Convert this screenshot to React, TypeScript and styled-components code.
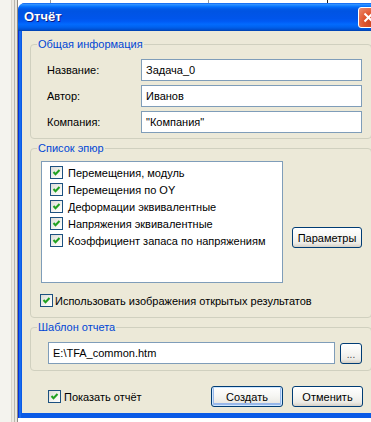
import React from 'react';
import styled, { createGlobalStyle, css } from 'styled-components';

const GlobalStyle = createGlobalStyle`
  html, body {
    margin: 0;
    padding: 0;
    background: #ffffff;
    overflow: hidden;
  }
  body {
    font-family: "Liberation Sans", Arial, sans-serif;
    font-size: 11px;
    color: #000;
  }
`;

const Desktop = styled.div`
  display: flex;
  width: 371px;
  height: 422px;
  overflow: hidden;
`;

// кусок окна позади диалога
const LeftPane = styled.div`
  flex: none;
  width: 18px;
  background: linear-gradient(
    to right,
    #f4f3ee 0 11px,
    #d9d6cc 11px 12px,
    #eceae3 12px 14px,
    #b9b6ad 14px 15px,
    #e9e7df 15px 17px,
    #8f8c84 17px 18px
  );
`;

const Stage = styled.div`
  flex: none;
  width: 366px;
  display: flex;
  flex-direction: column;
`;

const TopStrip = styled.div`
  height: 3px;
  background: linear-gradient(
    to right,
    #fff 0 32px,
    #9a9a9a 32px 33px,
    #fff 33px 190px,
    #9a9a9a 190px 191px,
    #fff 191px 309px,
    #222 309px 310px,
    #fff 310px
  );
`;

const Window = styled.div`
  display: flex;
  flex-direction: column;
  height: 415px;
  border-radius: 7px 7px 0 0;
  background: linear-gradient(
    to right,
    #0831d9 0 1px,
    #166aee 1px 3px,
    #0a5ae6 3px
  );
`;

const TitleBar = styled.div`
  flex: none;
  height: 28px;
  display: flex;
  align-items: center;
  padding: 0 5px 0 6px;
  border-radius: 7px 7px 0 0;
  background: linear-gradient(
    to bottom,
    #0058ee 0%,
    #3593ff 4%,
    #288eff 7%,
    #127dff 10%,
    #036ffc 14%,
    #0262ee 18%,
    #0057e5 24%,
    #0054e3 30%,
    #0055eb 56%,
    #005bf5 66%,
    #026afe 76%,
    #0062ef 86%,
    #0052d6 94%,
    #0040ab 100%
  );
`;

const Title = styled.span`
  flex: 1;
  color: #fff;
  font-family: "Liberation Sans", Arial, sans-serif;
  font-weight: bold;
  font-size: 13px;
  text-shadow: 1px 1px 0 #0a1883;
  padding-bottom: 1px;
`;

const CloseButton = styled.div`
  flex: none;
  width: 21px;
  height: 21px;
  box-sizing: border-box;
  border: 1px solid #fff;
  border-radius: 3px;
  display: flex;
  align-items: center;
  justify-content: center;
  background: radial-gradient(circle at 70% 75%, #c84421 0%, #e0552e 45%, #ec8d70 100%);
`;

const Client = styled.div`
  flex: 1;
  margin: 0 4px 5px;
  padding: 7px 8px 6px;
  background: #ece9d8;
  display: flex;
  flex-direction: column;
`;

const Group = styled.fieldset<{ $gap?: number }>`
  margin: ${p => p.$gap ?? 0}px 0 0;
  padding: 0;
  border: 1px solid #d0d0bf;
  border-radius: 4px;
  min-width: 0;
`;

const Legend = styled.legend`
  margin-left: 6px;
  padding: 0 1px;
  color: #0046d5;
  font-size: 11px;
  line-height: 13px;
`;

const InfoGrid = styled.div`
  display: grid;
  grid-template-columns: 94px 1fr;
  grid-auto-rows: 22px;
  row-gap: 4px;
  align-items: center;
  padding: 8px 9px 5px 16px;
`;

const FieldLabel = styled.span`
  font-size: 11px;
`;

const TextField = styled.div<{ $grow?: boolean }>`
  box-sizing: border-box;
  height: 22px;
  display: flex;
  align-items: center;
  padding: 0 4px;
  border: 1px solid #7f9db9;
  background: #fff;
  font-size: 11px;
  white-space: nowrap;
  ${p => p.$grow && css`flex: 1;`}
`;

const PlotsBody = styled.div`
  padding: 6px 9px 10px 10px;
`;

const PlotsRow = styled.div`
  display: flex;
  gap: 9px;
  align-items: flex-start;
`;

const ListBox = styled.div`
  box-sizing: border-box;
  width: 243px;
  height: 122px;
  padding: 2px 0 0 8px;
  border: 1px solid #7f9db9;
  background: #fff;
`;

const ListItem = styled.div`
  height: 17px;
  display: flex;
  align-items: center;
  gap: 5px;
  white-space: nowrap;
`;

const CheckRow = styled.div<{ $offset?: number; $gap?: number }>`
  display: flex;
  align-items: center;
  gap: ${p => p.$gap ?? 2}px;
  margin-left: ${p => p.$offset ?? 0}px;
  white-space: nowrap;
`;

const UseImagesRow = styled(CheckRow)`
  margin-top: 11px;
  height: 13px;
`;

const Box = styled.span`
  flex: none;
  box-sizing: border-box;
  width: 13px;
  height: 13px;
  border: 1px solid #1c5180;
  background: linear-gradient(135deg, #dcdcd7 0%, #f4f4f0 60%, #ffffff 100%);
  display: flex;
  align-items: center;
  justify-content: center;
`;

const Button = styled.div<{ $w: number; $h?: number; $primary?: boolean }>`
  flex: none;
  box-sizing: border-box;
  width: ${p => p.$w}px;
  height: ${p => p.$h ?? 21}px;
  display: flex;
  align-items: center;
  justify-content: center;
  border: 1px solid #003c74;
  border-radius: 3px;
  font-size: 11px;
  background: linear-gradient(
    to bottom,
    #ffffff 0%,
    #f6f6f3 45%,
    #ecebe6 80%,
    #d6d0c5 100%
  );
  ${p => p.$primary && css`
    box-shadow: inset 0 0 0 1px #cee7ff, inset 0 -1px 0 2px #98b8ea;
  `}
`;

const ParamsButton = styled(Button)`
  margin-top: 66px;
`;

const TemplateBody = styled.div`
  display: flex;
  align-items: center;
  gap: 5px;
  padding: 8px 9px 6px 17px;
`;

const BrowseButton = styled(Button)`
  align-items: flex-end;
  padding-bottom: 4px;
  font-size: 10px;
  line-height: 8px;
  color: #444;
`;

const Footer = styled.div`
  display: flex;
  align-items: center;
  margin-top: 15px;
  padding: 0 9px 0 18px;
  gap: 9px;
`;

const Spacer = styled.div`
  flex: 1;
`;

const Check = () => (
  <Box>
    <svg width="11" height="11" viewBox="0 0 11 11">
      <polyline points="2.5,5 4.5,7.2 8.5,3" fill="none" stroke="#21a121" strokeWidth="2" />
    </svg>
  </Box>
);

const plots = [
  'Перемещения, модуль',
  'Перемещения по OY',
  'Деформации эквивалентные',
  'Напряжения эквивалентные',
  'Коэффициент запаса по напряжениям',
];

const ReportDialog: React.FC = () => (
  <Window>
    <TitleBar>
      <Title>Отчёт</Title>
      <CloseButton>
        <svg width="11" height="11" viewBox="0 0 11 11">
          <path d="M1.5 1.5 L9.5 9.5 M9.5 1.5 L1.5 9.5" stroke="#fff" strokeWidth="2" />
        </svg>
      </CloseButton>
    </TitleBar>
    <Client>
      <Group>
        <Legend>Общая информация</Legend>
        <InfoGrid>
          <FieldLabel>Название:</FieldLabel>
          <TextField>Задача_0</TextField>
          <FieldLabel>Автор:</FieldLabel>
          <TextField>Иванов</TextField>
          <FieldLabel>Компания:</FieldLabel>
          <TextField>"Компания"</TextField>
        </InfoGrid>
      </Group>

      <Group $gap={3}>
        <Legend>Список эпюр</Legend>
        <PlotsBody>
          <PlotsRow>
            <ListBox>
              {plots.map(name => (
                <ListItem key={name}>
                  <Check />
                  {name}
                </ListItem>
              ))}
            </ListBox>
            <ParamsButton $w={70}>Параметры</ParamsButton>
          </PlotsRow>
          <UseImagesRow $offset={-1}>
            <Check />
            Использовать изображения открытых результатов
          </UseImagesRow>
        </PlotsBody>
      </Group>

      <Group $gap={3}>
        <Legend>Шаблон отчета</Legend>
        <TemplateBody>
          <TextField $grow>E:\TFA_common.htm</TextField>
          <BrowseButton $w={22}>...</BrowseButton>
        </TemplateBody>
      </Group>

      <Footer>
        <CheckRow $gap={3}>
          <Check />
          Показать отчёт
        </CheckRow>
        <Spacer />
        <Button $w={72} $primary>Создать</Button>
        <Button $w={71}>Отменить</Button>
      </Footer>
    </Client>
  </Window>
);

const App: React.FC = () => (
  <>
    <GlobalStyle />
    <Desktop>
      <LeftPane />
      <Stage>
        <TopStrip />
        <ReportDialog />
      </Stage>
    </Desktop>
  </>
);

export default App;
